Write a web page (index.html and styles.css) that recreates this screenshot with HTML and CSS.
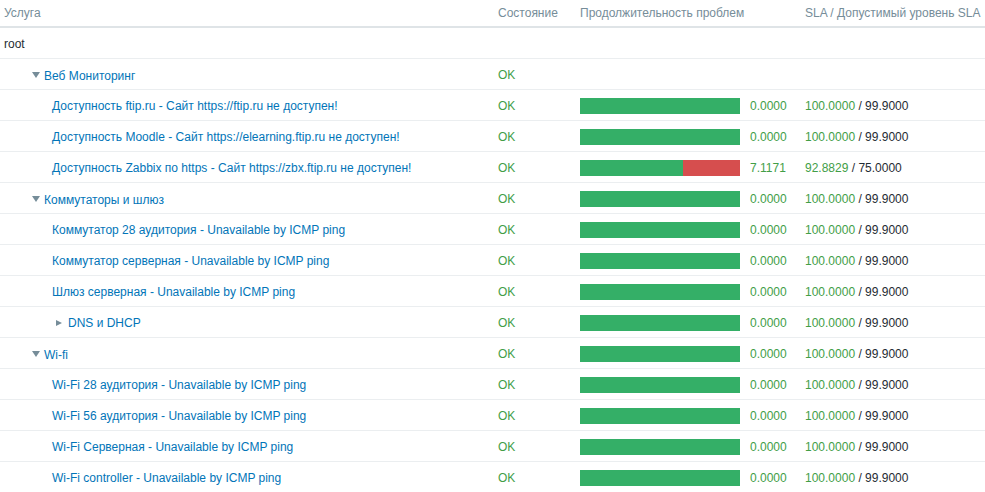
FILE: index.html
```html
<!DOCTYPE html>
<html>
<head>
<meta charset="utf-8">
<link rel="stylesheet" href="styles.css">
</head>
<body>
<table class="services">
  <thead>
    <tr>
      <th class="c-name">Услуга</th>
      <th class="c-state">Состояние</th>
      <th class="c-dur">Продолжительность проблем</th>
      <th class="c-sla">SLA / Допустимый уровень SLA</th>
    </tr>
  </thead>
  <tbody>
    <tr>
      <td class="c-name root">root</td><td></td><td></td><td></td>
    </tr>
    <tr>
      <td class="c-name"><span class="lvl1"><span class="arrow down"></span><a>Веб Мониторинг</a></span></td>
      <td class="ok">OK</td><td></td><td></td>
    </tr>
    <tr>
      <td class="c-name"><span class="lvl2"><a>Доступность ftip.ru - Сайт https://ftip.ru не доступен!</a></span></td>
      <td class="ok">OK</td>
      <td><div class="dur"><div class="bar"><span class="g" style="width:160px"></span></div><span class="val">0.0000</span></div></td>
      <td><span class="ok">100.0000</span> / 99.9000</td>
    </tr>
    <tr>
      <td class="c-name"><span class="lvl2"><a>Доступность Moodle - Сайт https://elearning.ftip.ru не доступен!</a></span></td>
      <td class="ok">OK</td>
      <td><div class="dur"><div class="bar"><span class="g" style="width:160px"></span></div><span class="val">0.0000</span></div></td>
      <td><span class="ok">100.0000</span> / 99.9000</td>
    </tr>
    <tr>
      <td class="c-name"><span class="lvl2"><a>Доступность Zabbix по https - Сайт https://zbx.ftip.ru не доступен!</a></span></td>
      <td class="ok">OK</td>
      <td><div class="dur"><div class="bar"><span class="g" style="width:103px"></span><span class="r" style="width:57px"></span></div><span class="val">7.1171</span></div></td>
      <td><span class="ok">92.8829</span> / 75.0000</td>
    </tr>
    <tr>
      <td class="c-name"><span class="lvl1"><span class="arrow down"></span><a>Коммутаторы и шлюз</a></span></td>
      <td class="ok">OK</td>
      <td><div class="dur"><div class="bar"><span class="g" style="width:160px"></span></div><span class="val">0.0000</span></div></td>
      <td><span class="ok">100.0000</span> / 99.9000</td>
    </tr>
    <tr>
      <td class="c-name"><span class="lvl2"><a>Коммутатор 28 аудитория - Unavailable by ICMP ping</a></span></td>
      <td class="ok">OK</td>
      <td><div class="dur"><div class="bar"><span class="g" style="width:160px"></span></div><span class="val">0.0000</span></div></td>
      <td><span class="ok">100.0000</span> / 99.9000</td>
    </tr>
    <tr>
      <td class="c-name"><span class="lvl2"><a>Коммутатор серверная - Unavailable by ICMP ping</a></span></td>
      <td class="ok">OK</td>
      <td><div class="dur"><div class="bar"><span class="g" style="width:160px"></span></div><span class="val">0.0000</span></div></td>
      <td><span class="ok">100.0000</span> / 99.9000</td>
    </tr>
    <tr>
      <td class="c-name"><span class="lvl2"><a>Шлюз серверная - Unavailable by ICMP ping</a></span></td>
      <td class="ok">OK</td>
      <td><div class="dur"><div class="bar"><span class="g" style="width:160px"></span></div><span class="val">0.0000</span></div></td>
      <td><span class="ok">100.0000</span> / 99.9000</td>
    </tr>
    <tr>
      <td class="c-name"><span class="lvl2n"><span class="arrow right"></span><a>DNS и DHCP</a></span></td>
      <td class="ok">OK</td>
      <td><div class="dur"><div class="bar"><span class="g" style="width:160px"></span></div><span class="val">0.0000</span></div></td>
      <td><span class="ok">100.0000</span> / 99.9000</td>
    </tr>
    <tr>
      <td class="c-name"><span class="lvl1"><span class="arrow down"></span><a>Wi-fi</a></span></td>
      <td class="ok">OK</td>
      <td><div class="dur"><div class="bar"><span class="g" style="width:160px"></span></div><span class="val">0.0000</span></div></td>
      <td><span class="ok">100.0000</span> / 99.9000</td>
    </tr>
    <tr>
      <td class="c-name"><span class="lvl2"><a>Wi-Fi 28 аудитория - Unavailable by ICMP ping</a></span></td>
      <td class="ok">OK</td>
      <td><div class="dur"><div class="bar"><span class="g" style="width:160px"></span></div><span class="val">0.0000</span></div></td>
      <td><span class="ok">100.0000</span> / 99.9000</td>
    </tr>
    <tr>
      <td class="c-name"><span class="lvl2"><a>Wi-Fi 56 аудитория - Unavailable by ICMP ping</a></span></td>
      <td class="ok">OK</td>
      <td><div class="dur"><div class="bar"><span class="g" style="width:160px"></span></div><span class="val">0.0000</span></div></td>
      <td><span class="ok">100.0000</span> / 99.9000</td>
    </tr>
    <tr>
      <td class="c-name"><span class="lvl2"><a>Wi-Fi Серверная - Unavailable by ICMP ping</a></span></td>
      <td class="ok">OK</td>
      <td><div class="dur"><div class="bar"><span class="g" style="width:160px"></span></div><span class="val">0.0000</span></div></td>
      <td><span class="ok">100.0000</span> / 99.9000</td>
    </tr>
    <tr>
      <td class="c-name"><span class="lvl2"><a>Wi-Fi controller - Unavailable by ICMP ping</a></span></td>
      <td class="ok">OK</td>
      <td><div class="dur"><div class="bar"><span class="g" style="width:160px"></span></div><span class="val">0.0000</span></div></td>
      <td><span class="ok">100.0000</span> / 99.9000</td>
    </tr>
  </tbody>
</table>
</body>
</html>
```
FILE: styles.css
```css
html, body {
  margin: 0;
  padding: 0;
  background: #ffffff;
}
body {
  font-family: "Liberation Sans", Arial, sans-serif;
  font-size: 12px;
  color: #1f2c33;
}
.services {
  width: 985px;
  border-collapse: collapse;
  table-layout: fixed;
}
.services th {
  height: 26px;
  padding: 0 4px;
  text-align: left;
  font-weight: normal;
  color: #768d99;
  border-bottom: 2px solid #dfe4e7;
  vertical-align: middle;
  white-space: nowrap;
}
.services td {
  height: 29px;
  padding: 1px 4px 0;
  border-bottom: 1px solid #ebeef0;
  vertical-align: middle;
  white-space: nowrap;
}
.services tbody tr:last-child td {
  border-bottom: none;
}
.c-name { width: 486px; }
.c-state { width: 74px; }
.c-dur { width: 217px; }
.c-sla { width: auto; }
a {
  color: #0275b8;
  text-decoration: none;
}
.ok {
  color: #429e47;
}
.lvl1 {
  display: inline-flex;
  align-items: center;
  padding-left: 28px;
}
.lvl2 {
  display: inline-block;
  padding-left: 48px;
}
.lvl2n {
  display: inline-flex;
  align-items: center;
  padding-left: 52px;
}
.arrow {
  display: inline-block;
  width: 0;
  height: 0;
}
.arrow.down {
  border-left: 4px solid transparent;
  border-right: 4px solid transparent;
  border-top: 6px solid #768d99;
  margin-right: 4px;
  margin-top: -2px;
}
.arrow.right {
  border-top: 3.5px solid transparent;
  border-bottom: 3.5px solid transparent;
  border-left: 6px solid #768d99;
  margin-right: 6px;
}
.dur {
  display: flex;
  align-items: center;
  gap: 10px;
}
.bar {
  display: flex;
  width: 160px;
  height: 16px;
}
.bar .g { background: #34af67; height: 16px; }
.bar .r { background: #d64e4e; height: 16px; }
.val {
  color: #429e47;
}
```
